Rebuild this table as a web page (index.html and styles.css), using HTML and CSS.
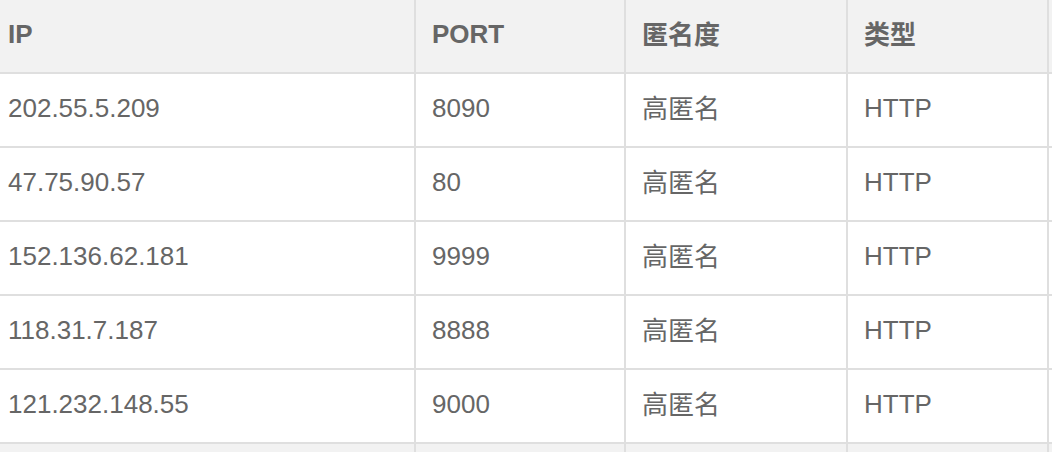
FILE: index.html
```html
<!DOCTYPE html>
<html lang="zh-CN">
<head>
<meta charset="utf-8">
<title>代理列表</title>
<link rel="stylesheet" href="styles.css">
</head>
<body>
<table class="proxy-table">
  <thead>
    <tr>
      <th class="c-ip">IP</th>
      <th class="c-port">PORT</th>
      <th class="c-anon cjk">匿名度</th>
      <th class="c-type cjk">类型</th>
      <th class="c-loc"></th>
    </tr>
  </thead>
  <tbody>
    <tr><td>202.55.5.209</td><td>8090</td><td class="cjk">高匿名</td><td>HTTP</td><td></td></tr>
    <tr><td>47.75.90.57</td><td>80</td><td class="cjk">高匿名</td><td>HTTP</td><td></td></tr>
    <tr><td>152.136.62.181</td><td>9999</td><td class="cjk">高匿名</td><td>HTTP</td><td></td></tr>
    <tr><td>118.31.7.187</td><td>8888</td><td class="cjk">高匿名</td><td>HTTP</td><td></td></tr>
    <tr><td>121.232.148.55</td><td>9000</td><td class="cjk">高匿名</td><td>HTTP</td><td></td></tr>
    <tr class="alt"><td></td><td></td><td></td><td></td><td></td></tr>
  </tbody>
</table>
</body>
</html>
```
FILE: styles.css
```css
html, body {
  margin: 0;
  padding: 0;
  background: #ffffff;
  overflow: hidden;
}

.proxy-table {
  margin-left: -8px;
  border-collapse: separate;
  border-spacing: 0;
  table-layout: fixed;
  width: 1257px;
  font-family: "Liberation Sans", Arial, "Noto Sans CJK SC", sans-serif;
  font-size: 26px;
  color: #666666;
}

.proxy-table th,
.proxy-table td {
  box-sizing: border-box;
  height: 74px;
  padding: 0 16px 3px;
  text-align: left;
  vertical-align: middle;
  border-right: 2px solid #dfdfdf;
  border-bottom: 2px solid #dfdfdf;
  white-space: nowrap;
}

.proxy-table .cjk {
  font-family: "Noto Sans CJK SC", sans-serif;
  padding-bottom: 7px;
}

.proxy-table th {
  background: #f2f2f2;
  font-weight: bold;
}

.proxy-table .c-ip { width: 424px; }
.proxy-table .c-port { width: 210px; }
.proxy-table .c-anon { width: 222px; }
.proxy-table .c-type { width: 201px; }
.proxy-table .c-loc { width: 200px; }

.proxy-table .alt td {
  background: #f2f2f2;
}
```
